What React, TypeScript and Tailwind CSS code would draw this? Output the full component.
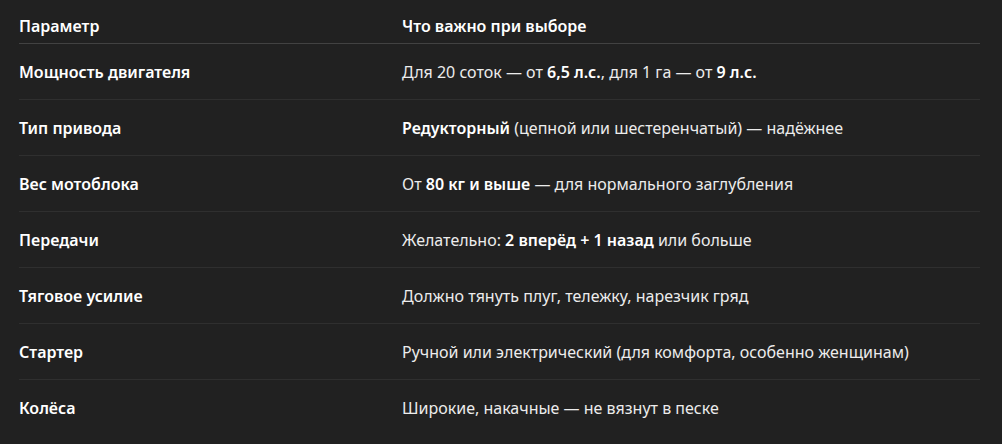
import type {ReactNode} from "react";

type Row = {
  param: string;
  value: ReactNode;
};

const rows: Row[] = [
  {
    param: "Мощность двигателя",
    value: (
      <>
        Для 20 соток — от <b className="font-semibold text-white">6,5 л.с.</b>, для 1 га — от{" "}
        <b className="font-semibold text-white">9 л.с.</b>
      </>
    )
  },
  {
    param: "Тип привода",
    value: (
      <>
        <b className="font-semibold text-white">Редукторный</b> (цепной или шестеренчатый) — надёжнее
      </>
    )
  },
  {
    param: "Вес мотоблока",
    value: (
      <>
        От <b className="font-semibold text-white">80 кг и выше</b> — для нормального заглубления
      </>
    )
  },
  {
    param: "Передачи",
    value: (
      <>
        Желательно: <b className="font-semibold text-white">2 вперёд + 1 назад</b> или больше
      </>
    )
  },
  {param: "Тяговое усилие", value: "Должно тянуть плуг, тележку, нарезчик гряд"},
  {param: "Стартер", value: "Ручной или электрический (для комфорта, особенно женщинам)"},
  {param: "Колёса", value: "Широкие, накачные — не вязнут в песке"}
];

export default function App() {
  return (
    <div className="min-h-[444px] w-full bg-[#212121] pl-[19px] pr-[22px] pt-[11px] font-['Segoe_UI','Noto_Sans','Open_Sans',sans-serif] text-[16px] text-[#ececec]">
      <table className="w-full border-collapse text-left">
        <thead>
          <tr className="border-b border-[#424242]">
            <th className="h-[32px] w-[383px] pt-[3px] pb-[4px] align-middle font-semibold text-white">Параметр</th>
            <th className="h-[32px] pt-[3px] pb-[4px] align-middle font-semibold text-white">Что важно при выборе</th>
          </tr>
        </thead>
        <tbody>
          {rows.map((row, i) => (
            <tr
              key={row.param}
              className={i < rows.length - 1 ? "border-b border-[#2f2f2f]" : ""}
            >
              <td className="h-[56px] pt-[2px] align-middle font-semibold text-white">{row.param}</td>
              <td className="h-[56px] pt-[2px] align-middle">{row.value}</td>
            </tr>
          ))}
        </tbody>
      </table>
    </div>
  );
}
